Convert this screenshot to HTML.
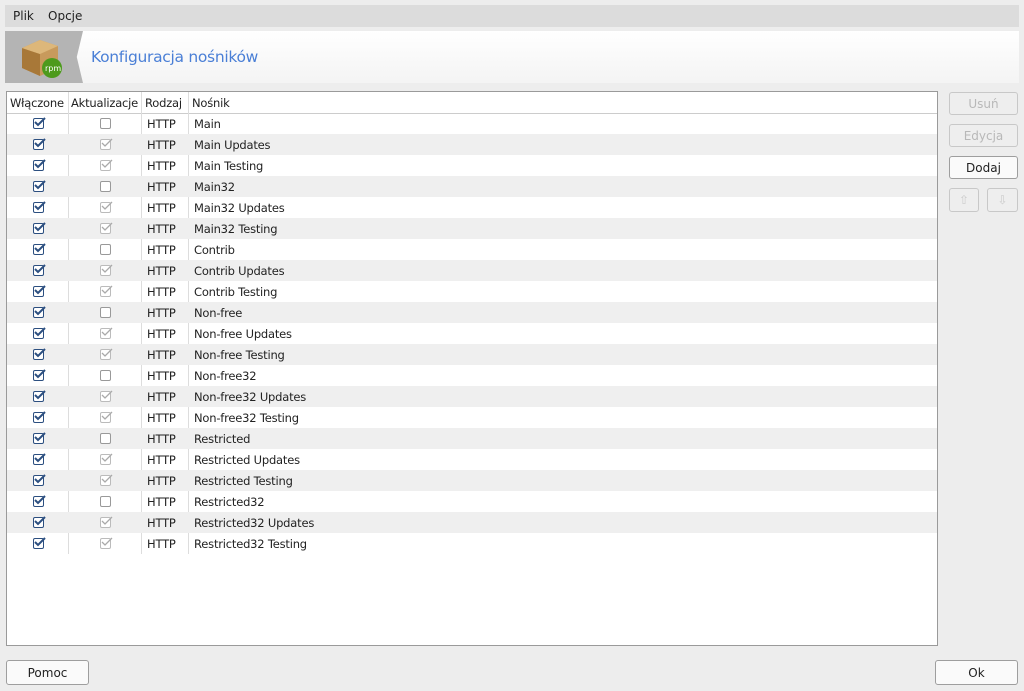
<!DOCTYPE html><html><head><meta charset="utf-8"><style>
body{margin:0;width:1024px;height:691px;background:#ededed;font-family:"DejaVu Sans",sans-serif;font-size:12px;color:#222;position:relative;overflow:hidden}
.a{position:absolute}
.menu{left:5px;top:5px;width:1014px;height:22px;background:#dcdcdc}
.menu span{position:absolute;top:4px}
.hdr{left:5px;top:31px;width:1014px;height:52px;background:linear-gradient(#fff,#f4f4f4)}
.ico{left:5px;top:31px;width:78px;height:52px;background:#b4b4b4;clip-path:polygon(0 0,100% 0,92% 50%,100% 100%,0 100%)}
.tbl{left:6px;top:91px;width:930px;height:553px;background:#fff;border:1px solid #9a9a9a;font-size:11.5px;letter-spacing:-0.2px}
.row{position:absolute;left:0;width:930px;height:21px}
.row.alt{background:#efefef}
.c{position:absolute;top:4px}
.cb{position:absolute;width:9px;height:9px;border:1px solid #999;border-radius:2px;background:#fff;top:5px}
.cb.on{border-color:#2c4f80}
.btn{position:absolute;background:#fafafa;border:1px solid #9e9e9e;border-radius:3px;text-align:center;line-height:22px;box-sizing:border-box}
.dis{color:#b8b8b8;border-color:#c8c8c8;background:#eee}
.vl{position:absolute;top:0;width:1px;background:#ddd}
</style></head><body>
<div class="a menu"><span style="left:8px">Plik</span><span style="left:43px">Opcje</span></div>
<div class="a hdr"></div>
<div class="a ico"></div>
<svg class="a" style="left:18px;top:36px" width="48" height="46"><polygon points="4,12 22,4 40,10 40,32 22,40 4,32" fill="#c89a5c"/><polygon points="4,12 22,18 22,40 4,32" fill="#a87838"/><polygon points="4,12 22,4 40,10 22,18" fill="#ddb77a"/><circle cx="34" cy="32" r="10" fill="#4d9a1c"/><text x="27" y="35" font-size="8" fill="#fff" font-family="DejaVu Sans">rpm</text></svg>
<div class="a" style="left:91px;top:48px;font-size:15.5px;letter-spacing:-0.3px;color:#4a7fd6">Konfiguracja nośników</div>
<div class="a tbl">
<div class="row" style="top:0;height:21px;border-bottom:1px solid #ccc"><span class="c" style="left:3px">Włączone</span><span class="c" style="left:64px">Aktualizacje</span><span class="c" style="left:138px">Rodzaj</span><span class="c" style="left:185px">Nośnik</span></div>
<div class="vl" style="left:61px;height:462px"></div><div class="vl" style="left:134px;height:462px"></div><div class="vl" style="left:181px;height:462px"></div>
<div id="rows"></div>
</div>
<script>
var n=["Main","Main Updates","Main Testing","Main32","Main32 Updates","Main32 Testing","Contrib","Contrib Updates","Contrib Testing","Non-free","Non-free Updates","Non-free Testing","Non-free32","Non-free32 Updates","Non-free32 Testing","Restricted","Restricted Updates","Restricted Testing","Restricted32","Restricted32 Updates","Restricted32 Testing"],h="";
n.forEach(function(s,i){var up=i%3!=0;h+='<div class="row'+(i%2?' alt':'')+'" style="top:'+(21+i*21)+'px"><div class="cb on" style="left:26px"></div><svg style="position:absolute;left:27px;top:4px" width="12" height="10"><path d="M1 5l3 3 7-7" stroke="#2c4f80" stroke-width="2" fill="none"/></svg><div class="cb" style="left:93px;'+(up?'border-color:#bbb':'')+'"></div>'+(up?'<svg style="position:absolute;left:94px;top:4px" width="12" height="10"><path d="M1 5l3 3 7-7" stroke="#aaa" stroke-width="1.3" fill="none"/></svg>':'')+'<span class="c" style="left:140px">HTTP</span><span class="c" style="left:187px">'+s+'</span></div>'});
document.getElementById('rows').innerHTML=h;
</script>
<div class="btn dis" style="left:949px;top:92px;width:69px;height:23px">Usuń</div>
<div class="btn dis" style="left:949px;top:124px;width:69px;height:23px">Edycja</div>
<div class="btn" style="left:949px;top:156px;width:69px;height:23px">Dodaj</div>
<div class="btn dis" style="left:949px;top:188px;width:30px;height:24px;color:#ccc">⇧</div>
<div class="btn dis" style="left:987px;top:188px;width:31px;height:24px;color:#ccc">⇩</div>
<div class="btn" style="left:6px;top:660px;width:83px;height:25px;line-height:24px">Pomoc</div>
<div class="btn" style="left:935px;top:660px;width:83px;height:25px;line-height:24px">Ok</div>
</body></html>
